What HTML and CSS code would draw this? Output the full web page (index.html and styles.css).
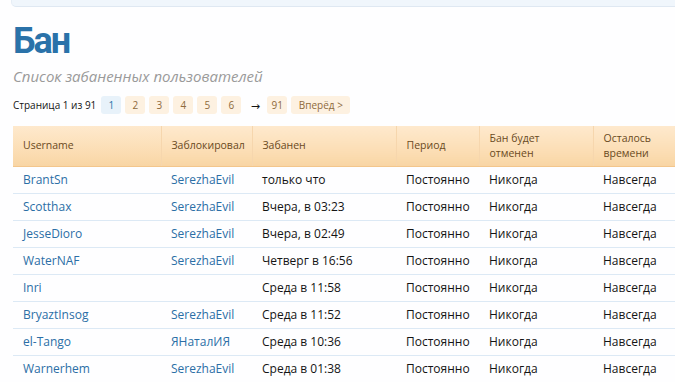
FILE: index.html
```html
<!DOCTYPE html>
<html lang="ru">
<head>
<meta charset="utf-8">
<title>Бан</title>
<link rel="stylesheet" href="styles.css">
</head>
<body>
<div class="topbar"></div>
<main class="content">
  <h1 class="title">Бан</h1>
  <p class="subtitle">Список забаненных пользователей</p>
  <nav class="pager">
    <span class="pager-label">Страница 1 из 91</span>
    <span class="pg pg-current">1</span>
    <a class="pg">2</a>
    <a class="pg">3</a>
    <a class="pg">4</a>
    <a class="pg">5</a>
    <a class="pg">6</a>
    <span class="pg-skip">→</span>
    <a class="pg">91</a>
    <a class="pg pg-next">Вперёд &gt;</a>
  </nav>
  <table class="bans">
    <thead>
      <tr>
        <th class="c1">Username</th>
        <th class="c2">Заблокировал</th>
        <th class="c3">Забанен</th>
        <th class="c4">Период</th>
        <th class="c5">Бан будет отменен</th>
        <th class="c6">Осталось времени</th>
      </tr>
    </thead>
    <tbody>
      <tr><td><a>BrantSn</a></td><td><a>SerezhaEvil</a></td><td>только что</td><td>Постоянно</td><td>Никогда</td><td>Навсегда</td></tr>
      <tr><td><a>Scotthax</a></td><td><a>SerezhaEvil</a></td><td>Вчера, в 03:23</td><td>Постоянно</td><td>Никогда</td><td>Навсегда</td></tr>
      <tr><td><a>JesseDioro</a></td><td><a>SerezhaEvil</a></td><td>Вчера, в 02:49</td><td>Постоянно</td><td>Никогда</td><td>Навсегда</td></tr>
      <tr><td><a>WaterNAF</a></td><td><a>SerezhaEvil</a></td><td>Четверг в 16:56</td><td>Постоянно</td><td>Никогда</td><td>Навсегда</td></tr>
      <tr><td><a>Inri</a></td><td></td><td>Среда в 11:58</td><td>Постоянно</td><td>Никогда</td><td>Навсегда</td></tr>
      <tr><td><a>BryaztInsog</a></td><td><a>SerezhaEvil</a></td><td>Среда в 11:52</td><td>Постоянно</td><td>Никогда</td><td>Навсегда</td></tr>
      <tr><td><a>el-Tango</a></td><td><a>ЯНаталИЯ</a></td><td>Среда в 10:36</td><td>Постоянно</td><td>Никогда</td><td>Навсегда</td></tr>
      <tr><td><a>Warnerhem</a></td><td><a>SerezhaEvil</a></td><td>Среда в 01:38</td><td>Постоянно</td><td>Никогда</td><td>Навсегда</td></tr>
    </tbody>
  </table>
</main>
</body>
</html>
```
FILE: styles.css
```css
html, body {
  margin: 0;
  padding: 0;
  background: #fefeff;
  overflow: hidden;
}
body {
  font-family: "Open Sans", "DejaVu Sans", sans-serif;
  color: #141414;
  width: 675px;
  height: 382px;
}
.topbar {
  margin-left: 11px;
  height: 6px;
  background: #f0f6fc;
  border-bottom: 1px solid #dfe8f2;
  border-left: 1px solid #e6eef6;
  border-bottom-left-radius: 5px;
}
.content {
  padding: 0 0 0 13px;
}
.title {
  margin: 12px 0 0;
  font-family: Roboto, "Open Sans", sans-serif;
  font-size: 36px;
  line-height: 44px;
  font-weight: 700;
  letter-spacing: -2px;
  color: #2a72a9;
}
.subtitle {
  margin: 4px 0 0;
  font-size: 15px;
  line-height: 18px;
  font-style: italic;
  color: #9a9a9a;
}
.pager {
  display: flex;
  align-items: center;
  gap: 4px;
  margin-top: 11px;
  height: 18px;
  font-size: 10px;
}
.pager-label {
  color: #141414;
  margin-right: 1px;
}
.pg {
  display: flex;
  align-items: center;
  justify-content: center;
  min-width: 20px;
  height: 18px;
  box-sizing: border-box;
  background: #fdf1e1;
  color: #8e6a3c;
  border-radius: 3px;
}
.pg-current {
  background: #e8f2fa;
  color: #2a72a9;
}
.pg-skip {
  width: 12px;
  text-align: center;
  color: #141414;
  margin: 0 2px 0 4px;
  font-size: 11px;
}
.pg-next {
  width: 59px;
}
.bans {
  margin-top: 12px;
  border-collapse: collapse;
  table-layout: fixed;
  width: 662px;
  font-size: 12px;
}
.bans th {
  height: 40px;
  box-sizing: border-box;
  padding: 0 10px;
  text-align: left;
  font-weight: 400;
  font-size: 10.5px;
  line-height: 15px;
  color: #6a4a1e;
  background: linear-gradient(#fee9cd, #fbdcb1 70%, #f8d5a4);
  border-bottom: 1px solid #f3c68c;
  border-left: 1px solid #f6d6ad;
}
.bans th:first-child { border-left: none; }
.bans .c1 { width: 148px; }
.bans .c2 { width: 91px; }
.bans .c3 { width: 144px; }
.bans .c4 { width: 83px; }
.bans .c5 { width: 114px; }
.bans .c6 { width: 82px; }
.bans td {
  height: 27px;
  box-sizing: border-box;
  padding: 0 10px;
  border-bottom: 1px solid #dce9f5;
  white-space: nowrap;
  line-height: 16px;
}
.bans a {
  color: #2b6ea6;
  text-decoration: none;
}
```
